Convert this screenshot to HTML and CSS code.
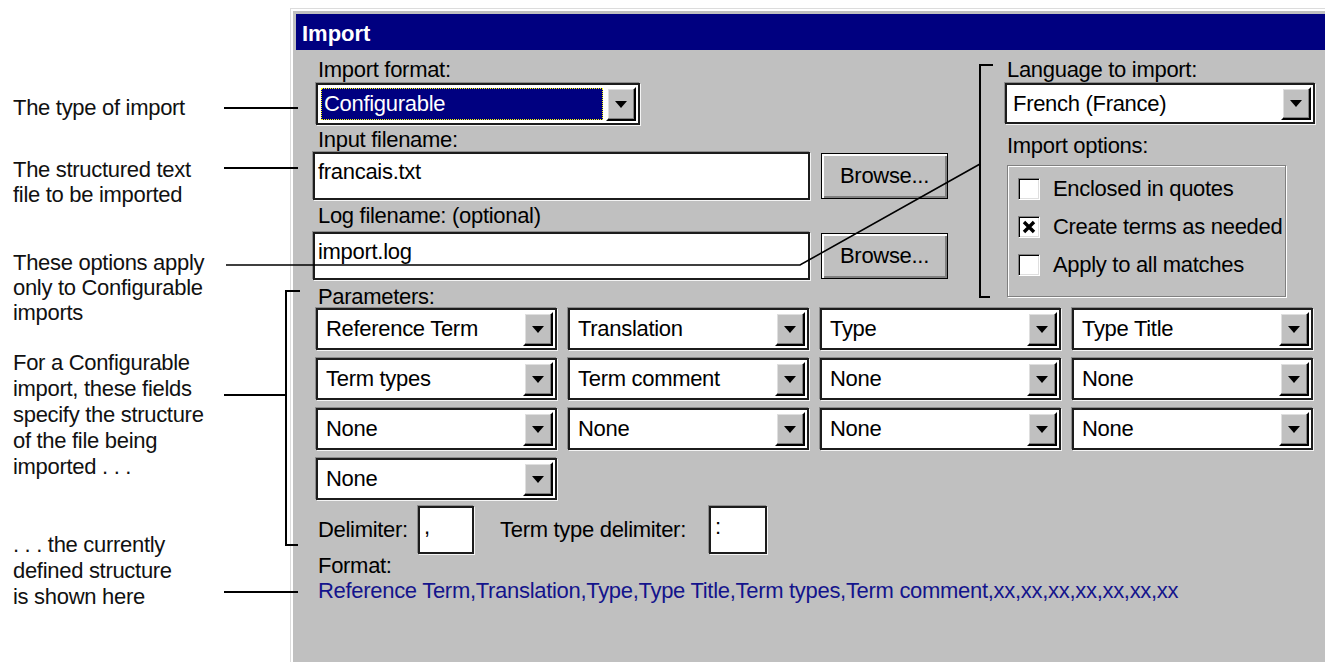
FILE: index.html
```html
<!DOCTYPE html>
<html lang="en">
<head>
<meta charset="utf-8">
<title>Import</title>
<link rel="stylesheet" href="styles.css">
</head>
<body>
<div class="page">
  <aside class="notes">
    <p class="note note-type">The type of import</p>
    <p class="note note-file">The structured text<br>file to be imported</p>
    <p class="note note-options">These options apply<br>only to Configurable<br>imports</p>
    <p class="note note-fields">For a Configurable<br>import, these fields<br>specify the structure<br>of the file being<br>imported . . .</p>
    <p class="note note-format">. . . the currently<br>defined structure<br>is shown here</p>
  </aside>

  <section class="dialog">
    <header class="titlebar">Import</header>
    <div class="dialog-body">
      <div class="top">
        <div class="files">
          <div class="label">Import format:</div>
          <div class="combo combo-format">
            <span class="combo-value selected"><span class="focus">Configurable</span></span>
            <span class="drop"><i class="arrow"></i></span>
          </div>
          <div class="label label-input">Input filename:</div>
          <div class="file-row">
            <div class="field">francais.txt</div>
            <button class="btn" type="button">Browse...</button>
          </div>
          <div class="label label-log">Log filename: (optional)</div>
          <div class="file-row file-row-log">
            <div class="field">import.log</div>
            <button class="btn" type="button">Browse...</button>
          </div>
        </div>

        <div class="lang">
          <div class="label">Language to import:</div>
          <div class="combo combo-lang">
            <span class="combo-value">French (France)</span>
            <span class="drop"><i class="arrow"></i></span>
          </div>
          <div class="label label-options">Import options:</div>
          <div class="options">
            <div class="check"><span class="box"></span><span>Enclosed in quotes</span></div>
            <div class="check"><span class="box"><svg class="tick" viewBox="0 0 14 14" width="14" height="14"><path d="M2 2 L12 12 M12 2 L2 12" stroke="#000" stroke-width="3.4" fill="none"/></svg></span><span>Create terms as needed</span></div>
            <div class="check"><span class="box"></span><span>Apply to all matches</span></div>
          </div>
        </div>
      </div>

      <div class="label label-params">Parameters:</div>
      <div class="params">
        <div class="combo"><span class="combo-value">Reference Term</span><span class="drop"><i class="arrow"></i></span></div>
        <div class="combo"><span class="combo-value">Translation</span><span class="drop"><i class="arrow"></i></span></div>
        <div class="combo"><span class="combo-value">Type</span><span class="drop"><i class="arrow"></i></span></div>
        <div class="combo"><span class="combo-value">Type Title</span><span class="drop"><i class="arrow"></i></span></div>
        <div class="combo"><span class="combo-value">Term types</span><span class="drop"><i class="arrow"></i></span></div>
        <div class="combo"><span class="combo-value">Term comment</span><span class="drop"><i class="arrow"></i></span></div>
        <div class="combo"><span class="combo-value">None</span><span class="drop"><i class="arrow"></i></span></div>
        <div class="combo"><span class="combo-value">None</span><span class="drop"><i class="arrow"></i></span></div>
        <div class="combo"><span class="combo-value">None</span><span class="drop"><i class="arrow"></i></span></div>
        <div class="combo"><span class="combo-value">None</span><span class="drop"><i class="arrow"></i></span></div>
        <div class="combo"><span class="combo-value">None</span><span class="drop"><i class="arrow"></i></span></div>
        <div class="combo"><span class="combo-value">None</span><span class="drop"><i class="arrow"></i></span></div>
        <div class="combo"><span class="combo-value">None</span><span class="drop"><i class="arrow"></i></span></div>
      </div>

      <div class="delims">
        <span class="delim-label">Delimiter:</span>
        <span class="delim-box">,</span>
        <span class="delim-label delim-label-type">Term type delimiter:</span>
        <span class="delim-box delim-box-type">:</span>
      </div>

      <div class="label label-format">Format:</div>
      <div class="format-value">Reference Term,Translation,Type,Type Title,Term types,Term comment,xx,xx,xx,xx,xx,xx,xx</div>
    </div>
  </section>

  <svg class="leaders" width="1325" height="662" viewBox="0 0 1325 662">
    <g stroke="#000" stroke-width="2" fill="none">
      <path d="M224 108 H298"/>
      <path d="M224 168 H298"/>
      <path d="M224 395 H286"/>
      <path d="M224 592 H298"/>
      <path d="M300 291 H286 V545 H298"/>
      <path d="M993 65 H980 V297 H990"/>
    </g>
    <path d="M226 265 H800 L980 164" stroke="#000" stroke-width="1.6" fill="none"/>
  </svg>
</div>
</body>
</html>
```

FILE: styles.css
```css
html, body {
  margin: 0;
  padding: 0;
  background: #fff;
}

body {
  font-family: "Liberation Sans", Arial, sans-serif;
  font-size: 22px;
  letter-spacing: -0.3px;
  color: #000;
}

.page {
  position: relative;
  display: flex;
  width: 1325px;
  height: 662px;
  overflow: hidden;
}

/* Callout notes on the left */
.notes {
  flex: none;
  width: 290px;
  box-sizing: border-box;
  padding: 95px 0 0 13px;
}

.note {
  margin: 0;
  line-height: 25px;
  color: #111;
}

.note-file { margin-top: 37px; }
.note-options { margin-top: 43px; }
.note-fields { margin-top: 25px; line-height: 26px; }
.note-format { margin-top: 52px; line-height: 26px; }

/* Dialog window */
.dialog {
  flex: none;
  width: 1100px;
  height: 700px;
  margin-top: 8px;
  box-sizing: border-box;
  background: #c0c0c0;
  border-top: 1px solid #dcdcdc;
  border-left: 1px solid #dcdcdc;
  padding: 5px 0 0 5px;
  box-shadow: inset 2px 2px 0 #fff;
}

.titlebar {
  height: 36px;
  box-sizing: border-box;
  padding: 4px 0 0 6px;
  line-height: 32px;
  background: #000080;
  color: #fff;
  font-weight: bold;
  letter-spacing: 0;
}

.dialog-body {
  padding: 8px 0 0 17px;
}

.top {
  display: flex;
  align-items: flex-start;
}

.label {
  height: 24px;
  line-height: 24px;
  white-space: nowrap;
  padding-left: 5px;
}

.files {
  flex: none;
  width: 635px;
}

.label-input { margin-top: 3px; }
.label-log { margin-top: 4px; }

.file-row {
  display: flex;
  align-items: center;
  gap: 11px;
  height: 48px;
}

.file-row-log { margin-top: 4px; }

/* Sunken white fields */
.field,
.combo,
.delim-box {
  box-sizing: border-box;
  background: #fff;
  border: 2px solid #1c1c1c;
  box-shadow: -1px -1px 0 #8c8c8c, 1px 1px 0 #f4f4f4;
}

.field {
  width: 497px;
  height: 48px;
  padding: 5px 0 0 3px;
  line-height: 25px;
}

.btn {
  width: 127px;
  height: 46px;
  padding: 0;
  font: inherit;
  letter-spacing: inherit;
  color: #000;
  background: #c0c0c0;
  border: 1px solid #000;
  box-shadow: inset 2px 2px 0 #fff, inset -2px -2px 0 #808080;
}

/* Drop-down combos */
.combo {
  display: flex;
  height: 42px;
  padding: 2px;
}

.combo-value {
  flex: 1;
  min-width: 0;
  display: flex;
  align-items: center;
  padding-left: 6px;
  white-space: nowrap;
  overflow: hidden;
}

.drop {
  flex: none;
  width: 30px;
  box-sizing: border-box;
  display: flex;
  align-items: center;
  justify-content: center;
  background: #c0c0c0;
  border: 2px solid;
  border-color: #fff #000 #000 #fff;
  box-shadow: inset -1px -1px 0 #808080, inset 1px 1px 0 #dfdfdf;
}

.arrow {
  width: 0;
  height: 0;
  border-left: 6px solid transparent;
  border-right: 6px solid transparent;
  border-top: 7px solid #000;
}

.combo-format {
  width: 324px;
  margin: 1px 0 0 3px;
}

.combo-format .combo-value {
  padding: 1px 3px 1px 1px;
}

.selected .focus {
  flex: 1;
  align-self: stretch;
  display: flex;
  align-items: center;
  padding-left: 3px;
  background: #000080;
  color: #fff;
  outline: 1px dotted #ffff00;
  outline-offset: -1px;
}

/* Right column: language and options; it hangs below the file rows */
.lang {
  flex: none;
  width: 310px;
  margin-left: 57px;
  margin-bottom: -40px;
}

.lang .label { padding-left: 2px; }

.combo-lang {
  height: 41px;
  margin-top: 1px;
}

.combo-lang .combo-value { padding-left: 4px; }

.label-options { margin-top: 10px; }

.options {
  width: 279px;
  height: 132px;
  margin: 7px 0 0 2px;
  box-sizing: border-box;
  padding: 12px 0 0 10px;
  border: 1px solid #808080;
  box-shadow: inset 1px 1px 0 #fff, 1px 1px 0 #fff;
  display: flex;
  flex-direction: column;
  gap: 16px;
}

.check {
  display: flex;
  align-items: center;
  gap: 13px;
  height: 22px;
  line-height: 22px;
  white-space: nowrap;
}

.box {
  flex: none;
  width: 22px;
  height: 22px;
  box-sizing: border-box;
  display: flex;
  align-items: center;
  justify-content: center;
  background: #fff;
  border: 1px solid;
  border-color: #808080 #fff #fff #808080;
  box-shadow: inset 1px 1px 0 #000, inset -1px -1px 0 #dfdfdf;
}

.tick { display: block; }

/* Parameter grid */
.label-params {
  height: 23px;
  margin-top: 5px;
}

.params {
  display: grid;
  grid-template-columns: repeat(4, 241px);
  grid-auto-rows: 42px;
  column-gap: 11px;
  row-gap: 8px;
  margin-left: 3px;
}

.params .combo-value { padding-left: 6px; }

/* Delimiters */
.delims {
  display: flex;
  align-items: center;
  height: 48px;
  margin: 6px 0 0 5px;
  white-space: nowrap;
}

.delim-label { width: 100px; }

.delim-label-type {
  width: 209px;
  margin-left: 26px;
}

.delim-box {
  width: 56px;
  height: 48px;
  padding: 4px 0 0 4px;
  line-height: 30px;
}

.delim-box-type { width: 58px; }

.label-format { margin-top: 0; }

.format-value {
  margin-top: 1px;
  padding-left: 5px;
  line-height: 24px;
  color: #14148c;
  white-space: nowrap;
}

/* Callout leader lines over the page */
.leaders {
  position: absolute;
  left: 0;
  top: 0;
  pointer-events: none;
}
```
